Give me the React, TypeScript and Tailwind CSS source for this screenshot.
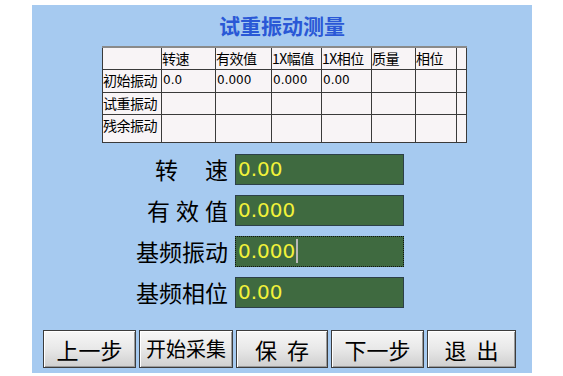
const cjk = { fontFamily: '"Noto Sans CJK SC", "Noto Sans", sans-serif' };
const num = { fontFamily: '"DejaVu Sans", "Noto Sans CJK SC", sans-serif' };

const colW = [59, 54, 56, 50, 50, 44, 41, 10];
const header = ["", "转速", "有效值", "1X幅值", "1X相位", "质量", "相位", ""];
const rows: { h: number; cells: string[] }[] = [
  { h: 23, cells: ["初始振动", "0.0", "0.000", "0.000", "0.00", "", "", ""] },
  { h: 22, cells: ["试重振动", "", "", "", "", "", "", ""] },
  { h: 28, cells: ["残余振动", "", "", "", "", "", "", ""] },
];

function Cell({ text, w }: { text: string; w: number }) {
  const isNum = /^[0-9.]+$/.test(text);
  return (
    <td
      className={
        "border border-[#3a3a3a] p-0 align-top text-black whitespace-nowrap overflow-hidden " +
        (isNum ? "text-[12px] leading-[21px] pl-[1px]" : "text-[14px] leading-[20px] tracking-[-0.5px]")
      }
      style={{ width: w, ...(isNum ? num : cjk) }}
    >
      {text}
    </td>
  );
}

function Label({ chars, w }: { chars: string[]; w: number }) {
  return (
    <div className="flex justify-between text-[23px] leading-[31px] text-black" style={{ width: w, ...cjk }}>
      {chars.map((c, i) => (
        <span key={i}>{c}</span>
      ))}
    </div>
  );
}

function Field({ chars, w, value, focus }: { chars: string[]; w: number; value: string; focus?: boolean }) {
  return (
    <div className="flex items-center">
      <div className="w-[196px] flex justify-end">
        <Label chars={chars} w={w} />
      </div>
      <div
        className={
          "ml-[7px] w-[169px] h-[31px] bg-[#3f6a40] flex items-center pl-[2px] " +
          (focus ? "border border-dotted border-[#111]" : "border border-[#2c4048]")
        }
      >
        <span className="text-[20px] leading-[24px] text-[#f2f23a]" style={num}>
          {value}
        </span>
        {focus && <span className="ml-[1px] w-[2px] h-[24px] bg-[#b8b8b8]" />}
      </div>
    </div>
  );
}

function Btn({ label, w, size }: { label: string; w: number; size: number }) {
  return (
    <div
      className="h-[38px] flex items-center justify-center border border-[#3c3c3c] bg-gradient-to-b from-[#f7f7f7] via-[#e8e8e8] to-[#cfcfcf] shadow-[inset_1px_1px_0_#ffffff,inset_-1px_-1px_0_#9a9a9a] text-black whitespace-pre leading-none"
      style={{ width: w, fontSize: size, ...cjk }}
    >
      {label}
    </div>
  );
}

export default function App() {
  return (
    <div className="w-[563px] h-[376px] bg-white pt-[5px] pl-[32px]">
      <div className="w-[500px] h-[368px] bg-[#a6caf0] flex flex-col">
        <div
          className="h-[41px] flex items-center justify-center text-[21px] font-bold text-[#2a58d6]"
          style={cjk}
        >
          试重振动测量
        </div>
        <div className="ml-[70px]">
          <table className="border-collapse bg-[#f8f4f6] table-fixed" style={{ width: 364 }}>
            <tbody>
              <tr style={{ height: 22 }} className="border-t-2 border-t-[#8a8a8a]">
                {header.map((h, i) => (
                  <Cell key={i} text={h} w={colW[i]} />
                ))}
              </tr>
              {rows.map((r, ri) => (
                <tr key={ri} style={{ height: r.h }}>
                  {r.cells.map((c, i) => (
                    <Cell key={i} text={c} w={colW[i]} />
                  ))}
                </tr>
              ))}
            </tbody>
          </table>
        </div>
        <div className="mt-[11px] flex flex-col gap-[10px]">
          <Field chars={["转", "速"]} w={73} value="0.00" />
          <Field chars={["有", "效", "值"]} w={81} value="0.000" />
          <Field chars={["基频振动"]} w={92} value="0.000" focus />
          <Field chars={["基频相位"]} w={92} value="0.00" />
        </div>
        <div className="mt-[22px] ml-[11px] flex gap-[3px]">
          <Btn label="上一步" w={93} size={22} />
          <Btn label="开始采集" w={94} size={20} />
          <Btn label="保  存" w={92} size={22} />
          <Btn label="下一步" w={93} size={22} />
          <Btn label="退  出" w={89} size={22} />
        </div>
      </div>
    </div>
  );
}
